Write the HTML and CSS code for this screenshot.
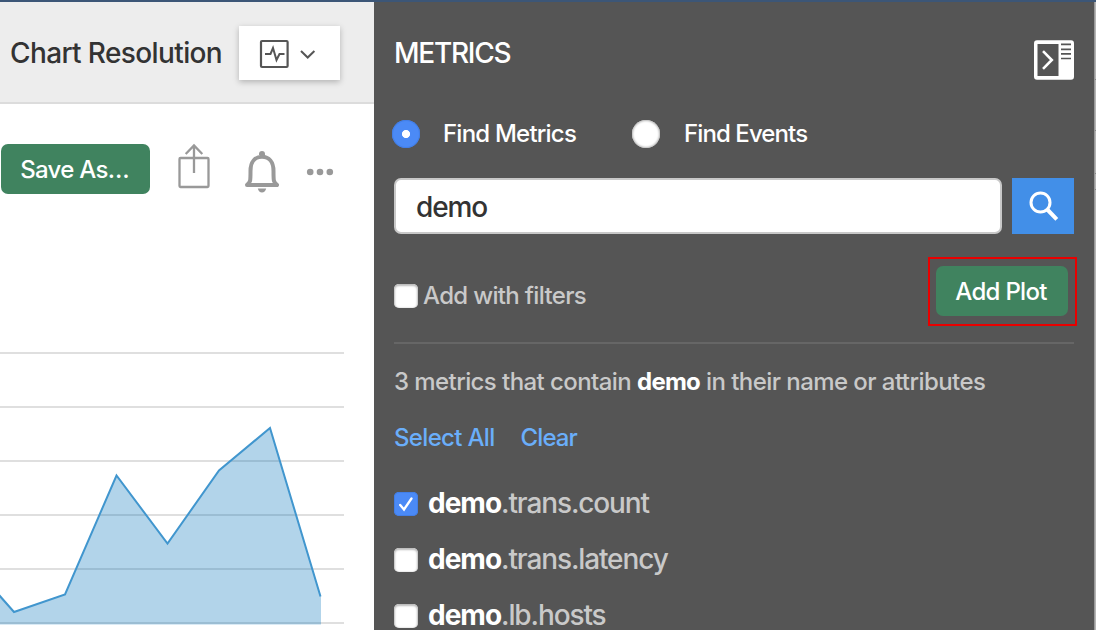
FILE: index.html
```html
<!DOCTYPE html>
<html lang="en">
<head>
<meta charset="utf-8">
<title>Chart Builder</title>
<link rel="stylesheet" href="styles.css">
</head>
<body>
<div class="app">
  <main class="chart-area">
    <header class="resolution-bar">
      <span class="resolution-label">Chart Resolution</span>
      <button class="resolution-button" aria-label="Resolution">
        <svg width="101" height="54" viewBox="0 0 101 54" fill="none" stroke="#555">
          <rect x="22" y="15" width="26.600" height="26" rx="1" stroke-width="2.200"/>
          <path d="M26 28h5.500l2.500-6 3.500 12 3-6h5" stroke-width="2"/>
          <path d="M62 25l6.700 6.500 6.700-6.500" stroke-width="2"/>
        </svg>
      </button>
    </header>
    <div class="toolbar">
      <button class="green-button save-button"><span class="save-text">Save As…</span></button>
      <svg class="tool-icons" width="190" height="60" viewBox="150 140 190 60" fill="none" stroke="#999" stroke-width="2">
        <rect x="179.500" y="158" width="29" height="29" rx="1" stroke-width="2.300"/>
        <path d="M194 173V146M185.700 154l8.300-8.500 8.300 8.500" stroke-width="2.300"/>
        <path d="M247 185c3.500-2.500 3.500-4 3.500-14 0-9 4.500-14.300 11.500-14.300S273.500 162 273.500 171c0 10 0 11.500 3.500 14z" stroke-width="4" stroke-linejoin="round"/>
        <path d="M259 155v-1a3 3 0 0 1 6 0v1zM257.800 188.500h8.400c-.7 2.600-2.100 4-4.200 4s-3.500-1.400-4.200-4z" fill="#999" stroke="none"/>
        <g fill="#999" stroke="none"><circle cx="310.200" cy="172" r="3.300"/><circle cx="320" cy="172" r="3.300"/><circle cx="329.800" cy="172" r="3.300"/></g>
      </svg>
    </div>
    <svg class="chart" width="374" height="290" viewBox="0 340 374 290">
      <path d="M0 353h344M0 407h344M0 461h344M0 515h344M0 569h344M0 623h344" stroke="#dfdfdf" stroke-width="2"/>
      <path d="M0 596L14 612 65 594.500 116.500 475.500 167.500 543.500 219 470.500 270 428 321 596.500V624.500H0z" fill="#0072b8" fill-opacity=".3"/>
      <path d="M-1 595L14 612 65 594.500 116.500 475.500 167.500 543.500 219 470.500 270 428 320.500 596.500" fill="none" stroke="#4196ce" stroke-width="2"/>
    </svg>
  </main>

  <aside class="metrics-panel">
    <div class="panel-head">
      <h1 class="panel-title">METRICS</h1>
      <svg class="collapse-icon" width="40" height="40" viewBox="0 0 40 40">
        <rect y=".3" width="40" height="39.400" rx="3" fill="#fff"/>
        <path d="M3.500 4h21v32h-21z" fill="#555"/>
        <path d="M9 11.200l8.800 8.800L9 28.800" fill="none" stroke="#fff" stroke-width="2.600"/>
        <path d="M27 4.300h10M27 9.300h10M27 13.900h10M27 18.500h10" stroke="#555" stroke-width="1.700"/>
      </svg>
    </div>
    <div class="find-row">
      <span class="radio radio-on"></span><span class="find-label find-metrics">Find Metrics</span>
      <span class="radio radio-events"></span><span class="find-label find-events">Find Events</span>
    </div>
    <div class="search-row">
      <div class="search-input">demo</div>
      <button class="search-button" aria-label="Search">
        <svg width="62" height="56" viewBox="0 0 62 56" fill="none" stroke="#fff">
          <circle cx="28.500" cy="24.500" r="9.500" stroke-width="3"/>
          <path d="M34.800 31l10 10.300" stroke-width="4"/>
        </svg>
      </button>
    </div>
    <div class="filter-row">
      <span class="checkbox"></span><span class="filter-label">Add with filters</span>
      <div class="highlight"><button class="green-button add-button"><span class="add-text">Add Plot</span></button></div>
    </div>
    <p class="summary"><span class="summary-start">3 metrics that contain</span> <b>demo</b> <span class="summary-end">in their name or attributes</span></p>
    <div class="links"><a class="select-all">Select All</a><a class="clear">Clear</a></div>
    <ul class="metric-list">
      <li class="metric"><span class="checkbox checked"><svg width="24" height="24" viewBox="0 0 24 24" fill="none" stroke="#fff" stroke-width="2.300" stroke-linecap="round"><path d="M6.200 13l3.800 4.500L17.500 6.500"/></svg></span><b>demo</b><span class="metric-rest">.trans.count</span></li>
      <li class="metric"><span class="checkbox"></span><b>demo</b><span class="metric-rest">.trans.latency</span></li>
      <li class="metric"><span class="checkbox"></span><b>demo</b><span class="metric-rest">.lb.hosts</span></li>
    </ul>
  </aside>
  <div class="page-edge"><i></i><i></i><i></i><i></i></div>
</div>
</body>
</html>
```
FILE: styles.css
```css
* { box-sizing: border-box; }
body { margin: 0; font-family: Inter, "Liberation Sans", sans-serif; font-size: 24px; font-weight: 450; white-space: nowrap; background: #fff; }
button { border: 0; padding: 0; font: inherit; }
svg { display: block; flex: none; }
.app { width: 1096px; height: 630px; border-top: 2px solid #3c5677; display: grid; grid-template-columns: 374px 720px 2px; overflow: hidden; }
.chart-area { display: flex; flex-direction: column; overflow: hidden; }
.resolution-bar { height: 102px; flex: none; background: #ededed; border-bottom: 2px solid #dcdcdc; display: flex; align-items: flex-start; padding: 24px 34px 0 10px; justify-content: space-between; }
.resolution-label { font-size: 28px; line-height: 54px; letter-spacing: -0.62px; color: #333; }
.resolution-button { width: 101px; height: 54px; background: #fff; box-shadow: 0 2px 6px rgba(0,0,0,.25); }
.toolbar { height: 236px; flex: none; display: flex; align-items: flex-start; padding: 36px 0 0 1px; }
.green-button { height: 50px; margin-top: 4px; border-radius: 7px; background: #40835f; color: #fff; font-weight: 500; line-height: 52px; letter-spacing: -0.7px; }
.save-button { width: 149px; padding-right: 2px; }
.chart { flex: none; }

.metrics-panel { background: #555; color: #c9c9c9; padding: 0 20px; overflow: hidden; }
.panel-head { height: 106px; display: flex; justify-content: space-between; padding-top: 38px; }
.panel-title { margin: 0; font-size: 28px; font-weight: 500; line-height: 26px; color: #fff; letter-spacing: -1.25px; }
.find-row { height: 70px; display: flex; align-items: flex-start; padding-top: 12px; margin-left: -2px; color: #fff; }
.radio { width: 28px; height: 28px; border-radius: 50%; background: #fff; box-shadow: inset 0 0 2px 1px #bbb; flex: none; }
.radio-on { background: radial-gradient(circle, #fff 0 3.7px, #4b8af6 4.400px); box-shadow: inset 0 0 0 1px #427ee6; }
.find-label { line-height: 28px; font-weight: 500; letter-spacing: -0.78px; }
.find-metrics { margin-left: 23px; width: 166px; }
.radio-events { margin-left: 23px; }
.find-events { margin-left: 24px; letter-spacing: -0.9px; }
.search-row { display: flex; height: 56px; gap: 10px; }
.search-input { width: 608px; border: 2px solid #c8c8c8; border-radius: 7px; background: #fff; color: #333; font-size: 28px; line-height: 54px; letter-spacing: -1.1px; padding-left: 20px; }
.search-button { width: 62px; height: 56px; background: #428fe8; }
.filter-row { height: 110px; border-bottom: 2px solid #666; display: flex; align-items: flex-start; padding-top: 23px; }
.filter-row .checkbox { margin-top: 27px; }
.filter-label { line-height: 24px; margin: 27px 0 0 5px; letter-spacing: -0.67px; }
.highlight { width: 149px; height: 69px; border: 2px solid #e90000; margin: 0 -3px 0 auto; padding: 3px 6px; }
.add-button { width: 132px; padding-right: 2px; }
.checkbox { width: 24px; height: 24px; border-radius: 5px; background: #fff; box-shadow: inset 0 1px 2px 1px #bbb; flex: none; }
.checked { background: #4b8af6; box-shadow: inset 0 0 0 1px #427ee6; }
.summary { margin: 26px 0 0; height: 24px; line-height: 24px; display: flex; letter-spacing: -0.58px; }
b { color: #fff; font-weight: 700; letter-spacing: -0.8px; }
.summary b { margin: 0 6px 0 6px; }
.summary-end { letter-spacing: -0.56px; }
.links { display: flex; height: 24px; line-height: 24px; margin-top: 32px; color: #6aaefa; font-weight: 500; gap: 26px; letter-spacing: -0.67px; }
.clear { letter-spacing: -0.9px; }
.metric-list { list-style: none; margin: 38px 0 0; padding: 0; font-size: 28px; }
.metric { height: 56px; line-height: 30px; display: flex; align-items: flex-start; letter-spacing: -1.12px; }
.metric b { letter-spacing: -1px; }
.metric .checkbox { margin: 4px 10px 0 0; }
.page-edge { background: #b5b5b5; border-left: 1px solid #999; display: flex; flex-direction: column; padding-top: 77px; }
.page-edge i { height: 1px; background: #888; margin-bottom: 50px; }
.page-edge i:nth-child(2) { margin-bottom: 42px; }
.page-edge i:nth-child(3) { margin-bottom: 15px; }
```
